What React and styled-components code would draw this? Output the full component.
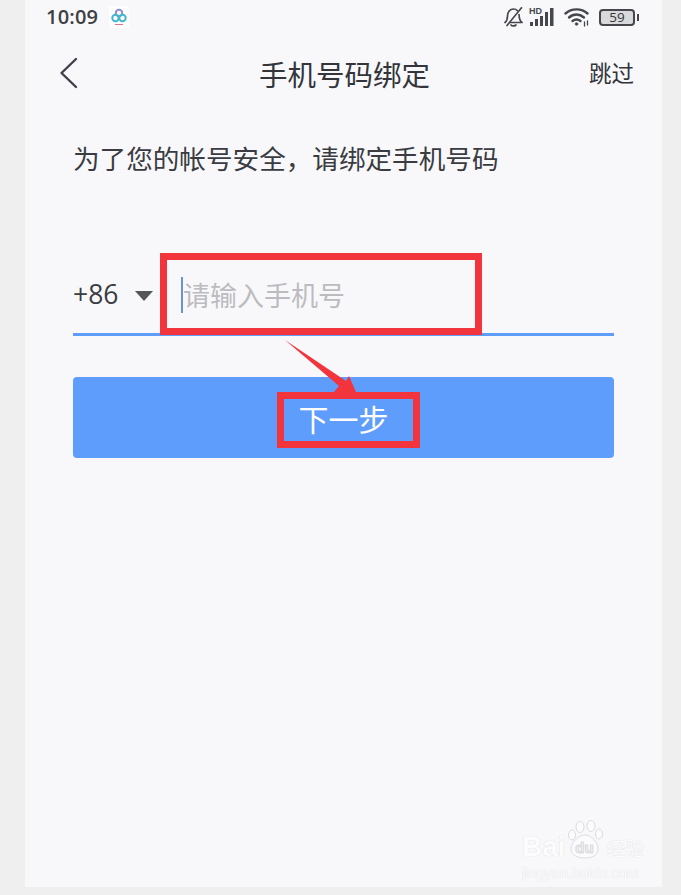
import React from "react";
import styled, { createGlobalStyle } from "styled-components";

const Global = createGlobalStyle`
  html, body { margin: 0; padding: 0; background: #efefef; }
  body { font-family: "Noto Sans CJK SC", "Noto Sans", sans-serif; }
`;

const Page = styled.div`
  position: relative;
  width: 681px;
  height: 895px;
  overflow: hidden;
  background: #efefef;
`;

const Screen = styled.div`
  margin-left: 25px;
  width: 637px;
  height: 887px;
  background: #f8f8fb;
  display: flex;
  flex-direction: column;
`;

const StatusBar = styled.div`
  height: 34px;
  display: flex;
  align-items: center;
  justify-content: space-between;
  padding: 0 23px 0 21px;
  color: #3d3f45;
`;

const StatusLeft = styled.div`
  display: flex;
  align-items: center;
  gap: 11px;
`;

const Time = styled.span`
  font-family: "Open Sans", sans-serif;
  font-size: 20px;
  font-weight: 600;
  letter-spacing: 0.2px;
  line-height: 1;
`;

const StatusRight = styled.div`
  display: flex;
  align-items: center;
  gap: 8px;
`;

const Battery = styled.div`
  width: 36px;
  height: 17px;
  box-sizing: border-box;
  border: 2px solid #45474c;
  border-radius: 4px;
  background: #d9d9dc;
  font-family: "Open Sans", sans-serif;
  font-size: 13.5px;
  line-height: 13px;
  text-align: center;
  color: #34363a;
  position: relative;
  &::after {
    content: "";
    position: absolute;
    right: -6px;
    top: 3px;
    width: 2px;
    height: 7px;
    background: #45474c;
  }
`;

const BatteryWrap = styled.div`
  margin-left: 1px;
  margin-right: 4px;
  display: flex;
`;

const NavBar = styled.div`
  height: 78px;
  display: grid;
  grid-template-columns: 100px 1fr 100px;
  align-items: center;
  padding: 0 28px 0 32px;
  box-sizing: border-box;
  color: #33353b;
`;

const BackButton = styled.div`
  display: flex;
  align-items: center;
`;

const Title = styled.div`
  text-align: center;
  font-size: 28.5px;
  line-height: 1;
  margin-left: -2px;
  margin-top: 2px;
`;

const Skip = styled.div`
  text-align: right;
  font-size: 22.5px;
  line-height: 1;
  margin-top: -1px;
`;

const Body = styled.div`
  padding: 0 48px;
  display: flex;
  flex-direction: column;
`;

const Prompt = styled.div`
  font-size: 26.6px;
  line-height: 32px;
  color: #3a3c42;
  margin-top: 30px;
  white-space: nowrap;
`;

const PhoneRow = styled.div`
  margin-top: 84px;
  height: 78px;
  box-sizing: border-box;
  border-bottom: 3px solid #5f9dfb;
  display: flex;
  align-items: center;
  padding-bottom: 2px;
`;

const Code = styled.span`
  font-family: "Open Sans", sans-serif;
  font-size: 26.5px;
  color: #3a3c42;
  line-height: 1;
  width: 62px;
`;

const Caret = styled.span`
  width: 0;
  height: 0;
  border-left: 9px solid transparent;
  border-right: 9px solid transparent;
  border-top: 10px solid #55565a;
  margin-top: 2px;
`;

const InputCursor = styled.span`
  width: 2px;
  height: 36px;
  background: #6a94d6;
  margin-left: 28px;
`;

const Placeholder = styled.span`
  font-size: 27px;
  line-height: 1;
  color: #bcbcc0;
`;

const NextButton = styled.div`
  margin-top: 41px;
  height: 81px;
  border-radius: 4px;
  background: #5f9dfd;
  color: #fff;
  font-size: 30px;
  line-height: 1;
  display: flex;
  align-items: center;
  justify-content: center;
`;

const Highlight = styled.div`
  position: absolute;
  box-sizing: border-box;
  border: 7px solid #f2343c;
  left: ${(p) => p.$x}px;
  top: ${(p) => p.$y}px;
  width: ${(p) => p.$w}px;
  height: ${(p) => p.$h}px;
`;

const Overlay = styled.svg`
  position: absolute;
  left: 0;
  top: 0;
`;

const Watermark = styled.div`
  position: absolute;
  left: 522px;
  top: 820px;
  width: 126px;
  font-family: "Liberation Sans", sans-serif;
  color: #fcfcfd;
  text-shadow: 0 0 1px #cfcfd4;
`;

const WatermarkTop = styled.div`
  display: flex;
  align-items: flex-end;
  font-size: 28px;
  font-weight: 700;
  line-height: 26px;
  height: 40px;
  white-space: nowrap;
`;

const WatermarkCn = styled.span`
  font-family: "Noto Sans CJK SC", sans-serif;
  font-size: 19px;
  font-weight: 400;
  line-height: 24px;
  margin-left: 3px;
`;

const WatermarkUrl = styled.div`
  font-size: 14.5px;
  line-height: 16px;
  margin-top: 5px;
  white-space: nowrap;
`;

const Paw = () => (
  <svg width="38" height="40" viewBox="0 0 38 40" style={{ flexShrink: 0 }}>
    <g fill="#fbfbfd" stroke="#dcdce0" strokeWidth="1">
      <ellipse cx="6" cy="15" rx="3.5" ry="5" />
      <ellipse cx="14" cy="7" rx="4" ry="5.5" />
      <ellipse cx="25" cy="6" rx="4" ry="5.5" />
      <ellipse cx="33" cy="14" rx="3.5" ry="5" />
      <path d="M19 15c6 0 13 7 13 14 0 7-7 9-13 9S5 36 5 29c0-7 8-14 14-14z" />
    </g>
    <text x="18.5" y="33" textAnchor="middle" fontSize="15" fontWeight="700" fontFamily="Liberation Sans, sans-serif" fill="#f2f2f4" stroke="#d6d6da" strokeWidth="0.4">du</text>
  </svg>
);

const AppIcon = () => (
  <svg width="20" height="22" viewBox="0 0 20 22">
    <rect x="0" y="0" width="20" height="22" fill="#fdfdfe" />
    <g fill="none" strokeWidth="2">
      <circle cx="10" cy="7" r="3.2" stroke="#8f8fd0" />
      <circle cx="6.5" cy="12" r="3.2" stroke="#43b7cf" />
      <circle cx="13.5" cy="12" r="3.2" stroke="#43b7cf" />
    </g>
    <rect x="6" y="18" width="8" height="1" fill="#e2708c" />
  </svg>
);

const BellOff = () => (
  <svg width="19" height="20" viewBox="0 0 19 20" fill="none" stroke="#45474c" strokeWidth="1.7" strokeLinejoin="round" strokeLinecap="round" style={{ marginRight: -2 }}>
    <path d="M1 15.5c2-1.500 2.500-3.500 2.500-6.500 0-4 2.500-7 6-7 1.500 0 3 .6 4 1.700" />
    <path d="M15 7.500c.2 4 .5 6.500 3 8H6" />
    <path d="M7 18c1 1.300 3.500 1.300 5 0" />
    <path d="M17.500 .8 3 18.500" />
  </svg>
);

const Signal = () => (
  <svg width="25" height="20" viewBox="0 0 25 20" fill="#45474c">
    <text x="0" y="7" fontFamily="Liberation Sans, sans-serif" fontWeight="700" fontSize="9">HD</text>
    <rect x="1" y="15" width="3" height="4" />
    <rect x="6" y="12" width="3" height="7" />
    <rect x="11" y="9" width="3" height="10" />
    <rect x="16" y="5" width="3" height="14" />
    <rect x="21" y="1" width="3.5" height="18" />
  </svg>
);

const Wifi = () => (
  <svg width="26" height="20" viewBox="0 0 26 20" fill="none" stroke="#45474c" strokeWidth="2.4" strokeLinecap="round" style={{ marginLeft: 2 }}>
    <path d="M1.500 6.500C7.500 1 17.500 1 23.500 6.500" />
    <path d="M5 10.500c4.500-4 10.500-4 15 0" />
    <path d="M8.500 14c2.500-2 5.500-2 8 0" />
    <circle cx="12.5" cy="17" r="1.3" fill="#45474c" strokeWidth="0.8" />
    <path d="M20.500 15v4M23.500 14v4" strokeWidth="1.3" />
  </svg>
);

export default function App() {
  return (
    <Page>
      <Global />
      <Screen>
        <StatusBar>
          <StatusLeft>
            <Time>10:09</Time>
            <AppIcon />
          </StatusLeft>
          <StatusRight>
            <BellOff />
            <Signal />
            <Wifi />
            <BatteryWrap>
              <Battery>59</Battery>
            </BatteryWrap>
          </StatusRight>
        </StatusBar>
        <NavBar>
          <BackButton>
            <svg width="24" height="34" viewBox="0 0 24 34" fill="none" stroke="#3e4149" strokeWidth="2.4" strokeLinecap="round" strokeLinejoin="round">
              <path d="M19 3 4.500 17 19 31" />
            </svg>
          </BackButton>
          <Title>手机号码绑定</Title>
          <Skip>跳过</Skip>
        </NavBar>
        <Body>
          <Prompt>为了您的帐号安全，请绑定手机号码</Prompt>
          <PhoneRow>
            <Code>+86</Code>
            <Caret />
            <InputCursor />
            <Placeholder>请输入手机号</Placeholder>
          </PhoneRow>
          <NextButton>下一步</NextButton>
        </Body>
      </Screen>

      <Highlight $x={160} $y={253} $w={322} $h={82} />
      <Highlight $x={277} $y={392} $w={143} $h={56} />
      <Overlay width="681" height="895" viewBox="0 0 681 895">
        <polygon points="285,340 346,381 349,376 356,392 334,392 339,386" fill="#f2343c" />
      </Overlay>

      <Watermark>
        <WatermarkTop>
          Bai
          <Paw />
          <WatermarkCn>经验</WatermarkCn>
        </WatermarkTop>
        <WatermarkUrl>jingyan.baidu.com</WatermarkUrl>
      </Watermark>
    </Page>
  );
}
